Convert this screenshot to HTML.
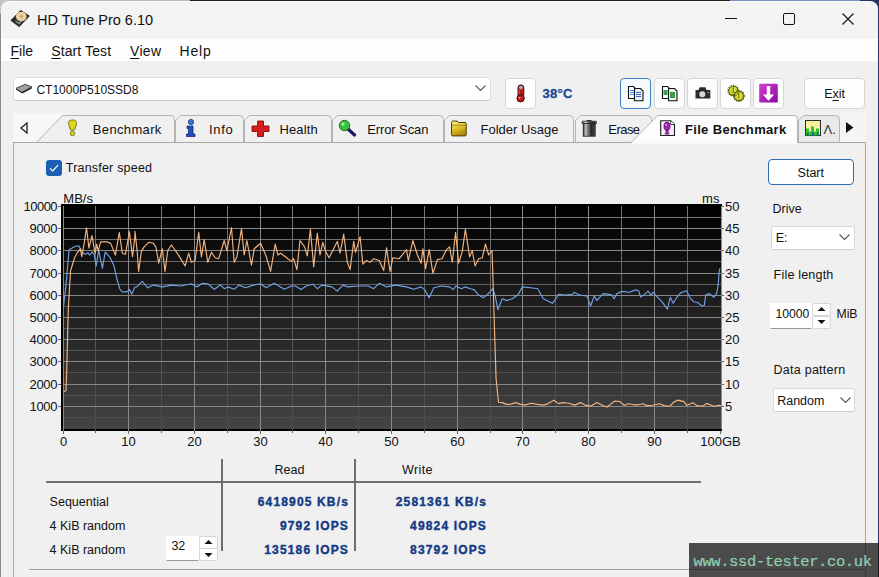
<!DOCTYPE html>
<html><head><meta charset="utf-8">
<style>
*{margin:0;padding:0;box-sizing:border-box}
html,body{width:879px;height:577px;overflow:hidden;background:#1c1c1c;font-family:"Liberation Sans",sans-serif;color:#000}
.a{position:absolute}
.t{position:absolute;white-space:nowrap;color:#111}
.val{font-weight:bold;color:#143a82;letter-spacing:1.15px;-webkit-text-stroke:0.4px #143a82}
u{text-decoration:underline;text-underline-offset:2px;text-decoration-thickness:1px}
.btn{position:absolute;background:#fdfdfd;border:1px solid #d6d6d6;border-radius:4px}
.edit{position:absolute;background:#fff;border:1px solid #dadada;border-bottom-color:#8a8a8a}
</style></head><body>
<div class="a" style="left:0;top:0;width:190px;height:8px;background:#b8b8b8"></div><div class="a" style="left:0;top:0;width:14px;height:14px;background:#c4c4c4"></div><div class="a" style="left:730px;top:0;width:149px;height:8px;background:#8090c0"></div><div class="a" style="left:860px;top:0;width:19px;height:577px;background:#283068"></div><div class="a" style="left:0;top:14px;width:1px;height:563px;background:#8a8a8a"></div>
<div class="a" style="left:1px;top:1px;width:877px;height:580px;background:#f0f0f0;border-radius:8px 8px 0 0;border-top:1px solid #fafafa"></div>
<div class="a" style="left:1px;top:2px;width:877px;height:35px;background:#f3f3f3;border-radius:7px 7px 0 0"></div>
<div class="a" style="left:1px;top:37px;width:877px;height:24px;background:#fdfdfd;border-top:1px solid #ececec"></div>
<svg class="a" style="left:0;top:0" width="40" height="40"><path d="M20.6,10.3 L29.4,15.9 L19.2,26.8 L10.8,20.5 Z" fill="#2c2a28" stroke="#1a1a1a" stroke-width="0.6"/><ellipse cx="21.2" cy="16.6" rx="5.4" ry="4.8" fill="#e9d3a2"/><circle cx="21.4" cy="16.4" r="1.6" fill="#c8aa70"/><path d="M15.5,21 L19,23.5 L21.5,21" stroke="#9a9a9a" stroke-width="1.4" fill="none"/></svg>
<div class="a" style="left:725px;top:18px;width:12px;height:1px;background:#111"></div>
<div class="a" style="left:783px;top:13px;width:12px;height:12px;border:1px solid #111;border-radius:2px"></div>
<svg class="a" style="left:842px;top:13px" width="12" height="12" viewBox="0 0 12 12"><path d="M0.5 0.5L11.5 11.5M11.5 0.5L0.5 11.5" stroke="#111" stroke-width="1.1"/></svg>
<div class="edit" style="left:13px;top:77px;width:478px;height:24px;border-color:#dcdcdc;border-bottom-color:#c8c8c8;border-radius:3px"></div>
<svg class="a" style="left:0;top:70px" width="40" height="30"><path d="M16,88.3 L25.3,84.3 L31.8,87 L22.3,92" fill="#98a0a8" stroke="#2a2a2a" stroke-width="0.8" transform="translate(0,-70)"/><path d="M16,88.3 L16,89.6 L22.3,93.6 L31.8,88.4 L31.8,87 L22.3,92 Z" fill="#1e1e1e" transform="translate(0,-70)"/></svg>
<svg class="a" style="left:475px;top:85px" width="11" height="7" viewBox="0 0 11 7"><path d="M0.5 0.5 L5.5 5.5 L10.5 0.5" fill="none" stroke="#555" stroke-width="1.1"/></svg>
<div class="btn" style="left:505px;top:78px;width:31px;height:31px"></div>
<svg class="a" style="left:500px;top:78px" width="36" height="30" viewBox="500 78 36 30"><rect x="518" y="85" width="5.8" height="12.5" rx="2.6" fill="#b81818" stroke="#2a0a0a" stroke-width="0.9"/><rect x="519" y="86" width="3.8" height="3.2" rx="1.4" fill="#90c0c0"/><path d="M519.2,90v6" stroke="#e06060" stroke-width="0.8"/><circle cx="520.6" cy="98.3" r="3.7" fill="#c01818" stroke="#2a0a0a" stroke-width="0.9"/><circle cx="519.6" cy="97.8" r="0.9" fill="#f0b0b0"/></svg>
<div class="btn" style="left:620px;top:78px;width:31px;height:31px;border-color:#3a82c4;background:#f8fbfe"></div>
<div class="btn" style="left:654px;top:78px;width:31px;height:31px"></div>
<div class="btn" style="left:687px;top:78px;width:31px;height:31px"></div>
<div class="btn" style="left:720px;top:78px;width:31px;height:31px"></div>
<div class="btn" style="left:753px;top:78px;width:31px;height:31px"></div>
<svg class="a" style="left:620px;top:78px" width="70" height="30" viewBox="620 78 70 30"><path d="M628.5,86.5 h5 l2.5,2.5 v9.5 h-7.5z" fill="#fff" stroke="#111" stroke-width="1.1"/><path d="M630,90.5h4M630,92.5h4M630,94.5h4" stroke="#3a8ae0" stroke-width="1"/><path d="M634.5,88.5 h6 l2.5,2.5 v9.8 h-8.5z" fill="#e8f0fa" stroke="#111" stroke-width="1.1"/><path d="M636,92.5h5M636,94.5h5M636,96.5h5" stroke="#3a6ac8" stroke-width="1"/><path d="M662.5,86.5 h5 l2.5,2.5 v9.5 h-7.5z" fill="#fff" stroke="#111" stroke-width="1.1"/><rect x="663.5" y="90" width="4" height="5" fill="#3aa050"/><path d="M668.5,88.5 h6 l2.5,2.5 v9.8 h-8.5z" fill="#e8f4e8" stroke="#111" stroke-width="1.1"/><rect x="670" y="92" width="5" height="6" fill="#3a9a48"/></svg>
<svg class="a" style="left:690px;top:78px" width="95" height="30" viewBox="690 78 95 30"><path d="M695.5,90 h3 l1,-2.8 h6 l1,2.8 h3.8 v8.5 h-14.8z" fill="#2c2c2c"/><circle cx="702.3" cy="94.3" r="3" fill="#d8d8d8"/><circle cx="708.3" cy="92.6" r="0.9" fill="#40c040"/><g fill="#d4dc2a" stroke="#4e4e08" stroke-width="1.1"><circle cx="733.3" cy="90.8" r="4.6"/><circle cx="738.9" cy="96" r="4.6"/></g><g fill="none" stroke="#6a6a10" stroke-width="1.4" stroke-dasharray="1.2 1.2"><circle cx="733.3" cy="90.8" r="5.3"/><circle cx="738.9" cy="96" r="5.3"/></g><path d="M733.3,87.5v5.5M738.9,92.7v5.5" stroke="#6a6a20" stroke-width="1.3"/><path d="M734.3,88v4.5M739.9,93.2v4.5" stroke="#f0f0a0" stroke-width="0.6"/><defs><linearGradient id="pg" x1="0" y1="0" x2="1" y2="1"><stop offset="0" stop-color="#d040d0"/><stop offset="1" stop-color="#8a0aa0"/></linearGradient></defs><rect x="759.2" y="83.8" width="18.6" height="18.6" rx="1.2" fill="url(#pg)"/><path d="M766.8,86 h3.4 v8.5 h4 l-5.7,6.3 l-5.7,-6.3 h4z" fill="#fff"/></svg>
<div class="btn" style="left:804px;top:78px;width:61px;height:31px"></div>
<!-- tab strip -->
<div class="a" style="left:13px;top:113px;width:50px;height:30px;background:#f7f7f7"></div>
<div class="a" style="left:840px;top:113px;width:26px;height:30px;background:#f5f5f5"></div>
<svg class="a" style="left:19px;top:122px" width="10" height="12" viewBox="0 0 10 12"><path d="M8 1 L2 6 L8 11 Z" fill="none" stroke="#222" stroke-width="1.3"/></svg>
<div class="a" style="left:13px;top:142px;width:853px;height:440px;border:1px solid #a8a8a8;border-bottom:none;background:#f0f0f0"></div>
<svg class="a" style="left:0;top:0" width="879" height="150"><path d="M37,142 L62.5,115.5 L170,115.5 Q174.5,115.5 174.5,119.5 L174.5,142 Z" fill="#f0f0f0"/><path d="M37,142 L62.5,115.5 L170,115.5 Q174.5,115.5 174.5,119.5 L174.5,142" fill="none" stroke="#b4b4b4"/><path d="M175.5,142 L175.5,120.5 L180.5,115.5 L239.5,115.5 Q243.5,115.5 243.5,119.5 L243.5,142 Z" fill="#f0f0f0"/><path d="M175.5,142 L175.5,120.5 L180.5,115.5 L239.5,115.5 Q243.5,115.5 243.5,119.5 L243.5,142" fill="none" stroke="#b4b4b4"/><path d="M244.5,142 L244.5,120.5 L249.5,115.5 L327.5,115.5 Q331.5,115.5 331.5,119.5 L331.5,142 Z" fill="#f0f0f0"/><path d="M244.5,142 L244.5,120.5 L249.5,115.5 L327.5,115.5 Q331.5,115.5 331.5,119.5 L331.5,142" fill="none" stroke="#b4b4b4"/><path d="M332.5,142 L332.5,120.5 L337.5,115.5 L439.5,115.5 Q443.5,115.5 443.5,119.5 L443.5,142 Z" fill="#f0f0f0"/><path d="M332.5,142 L332.5,120.5 L337.5,115.5 L439.5,115.5 Q443.5,115.5 443.5,119.5 L443.5,142" fill="none" stroke="#b4b4b4"/><path d="M444.5,142 L444.5,120.5 L449.5,115.5 L569.5,115.5 Q573.5,115.5 573.5,119.5 L573.5,142 Z" fill="#f0f0f0"/><path d="M444.5,142 L444.5,120.5 L449.5,115.5 L569.5,115.5 Q573.5,115.5 573.5,119.5 L573.5,142" fill="none" stroke="#b4b4b4"/><path d="M575.5,142 L575.5,120.5 L580.5,115.5 L647.5,115.5 Q651.5,115.5 651.5,119.5 L651.5,142 Z" fill="#f0f0f0"/><path d="M575.5,142 L575.5,120.5 L580.5,115.5 L647.5,115.5 Q651.5,115.5 651.5,119.5 L651.5,142" fill="none" stroke="#b4b4b4"/><path d="M798.5,142 L798.5,120.5 L803.5,115.5 L835.5,115.5 Q839.5,115.5 839.5,119.5 L839.5,142 Z" fill="#e9e9e9"/><path d="M798.5,142 L798.5,120.5 L803.5,115.5 L835.5,115.5 Q839.5,115.5 839.5,119.5 L839.5,142" fill="none" stroke="#b4b4b4"/></svg>
<svg class="a" style="left:846px;top:122px" width="8" height="11" viewBox="0 0 8 11"><path d="M0 0 L7.5 5.5 L0 11 Z" fill="#111"/></svg>
<!-- tab icons -->
<svg class="a" style="left:67px;top:119px" width="11" height="18" viewBox="0 0 11 18"><path d="M5.5 1 C9 1 10 3 9.5 5 L7.5 11 h-4 L1.5 5 C1 3 2 1 5.5 1z" fill="#d8d820" stroke="#6e6a10" stroke-width="0.9"/><circle cx="5.5" cy="14.5" r="2.2" fill="#d8d820" stroke="#6e6a10" stroke-width="0.9"/></svg>
<svg class="a" style="left:185px;top:119px" width="12" height="18" viewBox="0 0 12 18"><circle cx="6" cy="3" r="2.6" fill="#3a7ae0" stroke="#102a70" stroke-width="0.8"/><path d="M2 7 h6 v8 h2 v2.5 h-8.5 v-2.5 h2 v-5.5 h-1.5z" fill="#2050c0" stroke="#102a70" stroke-width="0.8"/></svg>
<svg class="a" style="left:251px;top:120px" width="19" height="17" viewBox="0 0 19 17"><path d="M6.5 1 h6 v5 h5.5 v5.5 h-5.5 v5 h-6 v-5 h-5.5 v-5.5 h5.5z" fill="#d81c1c" stroke="#801010" stroke-width="0.9"/></svg>
<svg class="a" style="left:338px;top:119px" width="19" height="18" viewBox="0 0 19 18"><path d="M9 9 L16.5 16" stroke="#1a1a6a" stroke-width="3.2" stroke-linecap="round"/><circle cx="6.5" cy="6.5" r="5.2" fill="#3cc040" stroke="#1a5a1a" stroke-width="0.9"/><circle cx="5" cy="5" r="1.5" fill="#b0f0b0"/></svg>
<svg class="a" style="left:448px;top:116px" width="22" height="24" viewBox="448 116 22 24"><defs><linearGradient id="fg" x1="0" y1="0" x2="0.4" y2="1"><stop offset="0" stop-color="#fff0a0"/><stop offset="0.5" stop-color="#e8c830"/><stop offset="1" stop-color="#b08a08"/></linearGradient></defs><path d="M451.5,122.5 q0,-1.5 1.5,-1.5 h4 l1.5,1.5 h6.5 q1.2,0 1.2,1.2 v11 q0,1.2 -1.2,1.2 h-12.3 q-1.2,0 -1.2,-1.2z" fill="url(#fg)" stroke="#4a3c08" stroke-width="1"/><path d="M451.8,125.2 h14.4" stroke="#8a7010" stroke-width="0.7"/></svg>
<svg class="a" style="left:578px;top:116px" width="24" height="24" viewBox="578 116 24 24"><defs><linearGradient id="tg" x1="0" y1="0" x2="1" y2="0"><stop offset="0" stop-color="#3a3a3a"/><stop offset="0.25" stop-color="#d8d8d8"/><stop offset="0.45" stop-color="#6a6a6a"/><stop offset="0.7" stop-color="#2a2a2a"/><stop offset="1" stop-color="#4a4a4a"/></linearGradient></defs><rect x="586.5" y="120" width="5" height="1.6" fill="#333"/><rect x="582" y="121.2" width="14.5" height="2.6" rx="0.8" fill="url(#tg)" stroke="#222" stroke-width="0.7"/><rect x="583.2" y="123.6" width="12" height="12.6" fill="url(#tg)" stroke="#1e1e1e" stroke-width="0.8"/><path d="M587,124.5v11M591,124.5v11" stroke="#1a1a1a" stroke-width="0.6" opacity="0.6"/></svg>
<svg class="a" style="left:805px;top:120px" width="16" height="16" viewBox="0 0 16 16"><rect x="0.5" y="0.5" width="15" height="15" fill="#f4f0a0" stroke="#2a2a2a"/><path d="M1 15.5 v-7 h3 v3 h2 v-5 h3 v5 h2 v-3 h3 v7z" fill="#30c030"/><path d="M2 15.5 v-3 h1.5 v3z M7 15.5v-3h1.5v3z M12 15.5v-3h1.5v3z" fill="#1a4ab0"/></svg>
<!-- checkbox -->
<div class="a" style="left:46px;top:160px;width:16px;height:16px;background:#1b5fb4;border-radius:3px"></div>
<svg class="a" style="left:46px;top:160px" width="16" height="16" viewBox="0 0 16 16"><path d="M4 8.3 L6.7 11 L12 5.2" fill="none" stroke="#fff" stroke-width="1.2"/></svg>
<!-- chart -->
<svg class="a" style="left:0;top:0" width="879" height="577">
<defs><linearGradient id="bg" x1="0" y1="0" x2="0" y2="1"><stop offset="0" stop-color="#000"/><stop offset="1" stop-color="#444"/></linearGradient><linearGradient id="mg" gradientUnits="userSpaceOnUse" x1="0" y1="206" x2="0" y2="430"><stop offset="0" stop-color="#787878"/><stop offset="0.45" stop-color="#5c5c5c"/><stop offset="1" stop-color="#4a4a4a"/></linearGradient></defs>
<rect x="61" y="204" width="661" height="227" fill="#000"/>
<rect x="63" y="206" width="658" height="223" fill="url(#bg)"/>
<g stroke="url(#mg)" stroke-width="1"><line x1="63" y1="417.5" x2="721" y2="417.5"/><line x1="63" y1="395.5" x2="721" y2="395.5"/><line x1="63" y1="372.5" x2="721" y2="372.5"/><line x1="63" y1="350.5" x2="721" y2="350.5"/><line x1="63" y1="328.5" x2="721" y2="328.5"/><line x1="63" y1="306.5" x2="721" y2="306.5"/><line x1="63" y1="284.5" x2="721" y2="284.5"/><line x1="63" y1="261.5" x2="721" y2="261.5"/><line x1="63" y1="239.5" x2="721" y2="239.5"/><line x1="63" y1="217.5" x2="721" y2="217.5"/><line x1="95.5" y1="206" x2="95.5" y2="431"/><line x1="161.5" y1="206" x2="161.5" y2="431"/><line x1="227.5" y1="206" x2="227.5" y2="431"/><line x1="292.5" y1="206" x2="292.5" y2="431"/><line x1="358.5" y1="206" x2="358.5" y2="431"/><line x1="424.5" y1="206" x2="424.5" y2="431"/><line x1="490.5" y1="206" x2="490.5" y2="431"/><line x1="555.5" y1="206" x2="555.5" y2="431"/><line x1="621.5" y1="206" x2="621.5" y2="431"/><line x1="687.5" y1="206" x2="687.5" y2="431"/></g><g stroke="#888" stroke-width="1"><line x1="63" y1="406.5" x2="721" y2="406.5"/><line x1="63" y1="384.5" x2="721" y2="384.5"/><line x1="63" y1="361.5" x2="721" y2="361.5"/><line x1="63" y1="339.5" x2="721" y2="339.5"/><line x1="63" y1="317.5" x2="721" y2="317.5"/><line x1="63" y1="295.5" x2="721" y2="295.5"/><line x1="63" y1="273.5" x2="721" y2="273.5"/><line x1="63" y1="250.5" x2="721" y2="250.5"/><line x1="63" y1="228.5" x2="721" y2="228.5"/><line x1="63.5" y1="206" x2="63.5" y2="431"/><line x1="128.5" y1="206" x2="128.5" y2="431"/><line x1="194.5" y1="206" x2="194.5" y2="431"/><line x1="260.5" y1="206" x2="260.5" y2="431"/><line x1="325.5" y1="206" x2="325.5" y2="431"/><line x1="391.5" y1="206" x2="391.5" y2="431"/><line x1="457.5" y1="206" x2="457.5" y2="431"/><line x1="522.5" y1="206" x2="522.5" y2="431"/><line x1="588.5" y1="206" x2="588.5" y2="431"/><line x1="654.5" y1="206" x2="654.5" y2="431"/></g>
<line x1="721.5" y1="206" x2="721.5" y2="429" stroke="#8a8a8a"/>
<g stroke="#666" stroke-width="1"><line x1="58" y1="206.5" x2="61" y2="206.5"/><line x1="722" y1="206.5" x2="724" y2="206.5"/><line x1="58" y1="228.5" x2="61" y2="228.5"/><line x1="722" y1="228.5" x2="724" y2="228.5"/><line x1="58" y1="250.5" x2="61" y2="250.5"/><line x1="722" y1="250.5" x2="724" y2="250.5"/><line x1="58" y1="273.5" x2="61" y2="273.5"/><line x1="722" y1="273.5" x2="724" y2="273.5"/><line x1="58" y1="295.5" x2="61" y2="295.5"/><line x1="722" y1="295.5" x2="724" y2="295.5"/><line x1="58" y1="317.5" x2="61" y2="317.5"/><line x1="722" y1="317.5" x2="724" y2="317.5"/><line x1="58" y1="339.5" x2="61" y2="339.5"/><line x1="722" y1="339.5" x2="724" y2="339.5"/><line x1="58" y1="361.5" x2="61" y2="361.5"/><line x1="722" y1="361.5" x2="724" y2="361.5"/><line x1="58" y1="384.5" x2="61" y2="384.5"/><line x1="722" y1="384.5" x2="724" y2="384.5"/><line x1="58" y1="406.5" x2="61" y2="406.5"/><line x1="722" y1="406.5" x2="724" y2="406.5"/><line x1="63.5" y1="431" x2="63.5" y2="434"/><line x1="95.5" y1="431" x2="95.5" y2="433"/><line x1="128.5" y1="431" x2="128.5" y2="434"/><line x1="161.5" y1="431" x2="161.5" y2="433"/><line x1="194.5" y1="431" x2="194.5" y2="434"/><line x1="227.5" y1="431" x2="227.5" y2="433"/><line x1="260.5" y1="431" x2="260.5" y2="434"/><line x1="292.5" y1="431" x2="292.5" y2="433"/><line x1="325.5" y1="431" x2="325.5" y2="434"/><line x1="358.5" y1="431" x2="358.5" y2="433"/><line x1="391.5" y1="431" x2="391.5" y2="434"/><line x1="424.5" y1="431" x2="424.5" y2="433"/><line x1="457.5" y1="431" x2="457.5" y2="434"/><line x1="490.5" y1="431" x2="490.5" y2="433"/><line x1="522.5" y1="431" x2="522.5" y2="434"/><line x1="555.5" y1="431" x2="555.5" y2="433"/><line x1="588.5" y1="431" x2="588.5" y2="434"/><line x1="621.5" y1="431" x2="621.5" y2="433"/><line x1="654.5" y1="431" x2="654.5" y2="434"/><line x1="687.5" y1="431" x2="687.5" y2="433"/><line x1="720.5" y1="431" x2="720.5" y2="434"/></g>
<path d="M63.5,306.7 L66.0,285.0 L69.1,249.7 L74.8,246.5 L78.7,245.7 L81.0,249.6 L83.4,253.5 L85.7,254.3 L88.0,252.8 L89.6,255.1 L92.0,252.0 L94.0,254.0 L96.2,266.0 L98.7,250.4 L102.4,268.4 L105.2,252.0 L110.0,257.4 L113.8,265.2 L117.0,279.3 L120.0,289.4 L122.4,291.8 L127.0,291.8 L129.4,289.4 L131.8,294.1 L134.9,287.0 L136.8,286.9 L142.3,281.4 L147.7,287.8 L153.2,285.1 L162.3,286.9 L171.4,285.1 L180.5,286.0 L191.4,283.8 L196.9,286.9 L202.3,283.3 L207.8,283.8 L214.2,289.3 L220.6,285.1 L224.2,288.7 L227.8,286.9 L234.2,289.3 L238.8,285.1 L246.0,287.8 L253.3,285.1 L260.6,283.8 L266.1,287.8 L274.2,283.3 L284.3,289.3 L291.5,286.0 L295.5,286.0 L300.9,289.6 L306.4,286.0 L312.8,284.2 L317.3,288.7 L321.9,285.1 L331.9,286.9 L337.3,291.1 L342.8,285.1 L348.2,286.9 L359.2,286.0 L368.3,286.0 L373.7,288.7 L379.2,283.3 L386.5,286.9 L395.6,285.1 L406.5,286.9 L413.8,289.3 L421.1,286.9 L424.7,289.6 L429.2,297.8 L433.8,287.8 L441.1,286.0 L449.6,286.9 L453.2,289.6 L455.9,286.0 L461.4,288.7 L465.0,286.9 L470.5,288.7 L474.1,289.6 L478.7,295.1 L483.2,297.8 L487.8,294.2 L492.7,288.7 L495.1,295.1 L497.8,309.7 L502.3,298.7 L506.9,300.6 L512.3,298.7 L517.8,295.1 L522.4,286.9 L530.6,287.8 L537.8,288.7 L543.3,298.7 L548.8,301.5 L552.4,303.3 L555.1,299.6 L558.8,294.2 L565.1,295.1 L572.4,294.2 L574.2,292.4 L579.7,295.1 L587.0,296.0 L590.6,306.0 L594.3,296.0 L597.0,300.6 L601.5,295.1 L603.7,293.6 L608.9,294.4 L611.8,295.1 L614.1,298.8 L617.0,293.6 L622.2,291.4 L629.6,292.2 L635.5,289.9 L638.5,290.7 L640.7,297.0 L644.4,294.4 L648.1,291.1 L651.0,295.1 L653.2,292.2 L656.2,295.8 L662.1,301.8 L667.3,309.2 L670.3,297.3 L673.2,303.2 L676.9,297.3 L680.6,292.9 L686.5,290.7 L690.2,298.1 L693.9,301.8 L697.6,302.5 L702.0,305.9 L704.3,305.5 L705.7,295.1 L709.4,293.6 L713.9,297.3 L716.8,292.9 L718.3,284.0 L719.1,272.2 L719.8,268.5" fill="none" stroke="#72a2e4" stroke-width="1.15" stroke-linejoin="round"/>
<path d="M63.5,392.0 L66.0,390.5 L66.6,374.0 L67.5,340.0 L68.3,309.0 L70.5,271.0 L74.5,258.0 L77.2,252.8 L80.3,248.9 L81.8,256.7 L84.2,243.4 L86.5,227.8 L88.9,248.0 L92.0,235.6 L95.1,253.5 L96.7,244.2 L98.2,251.2 L100.6,241.8 L106.8,241.8 L110.7,243.4 L115.4,255.1 L119.3,232.5 L122.4,253.5 L125.5,254.3 L129.4,231.7 L132.5,256.7 L134.9,236.4 L135.0,231.4 L137.2,251.4 L138.6,271.4 L141.4,251.4 L144.1,246.9 L148.7,242.3 L153.2,243.2 L155.9,246.9 L158.7,263.2 L162.3,248.7 L165.0,271.4 L167.8,250.5 L171.4,245.0 L176.0,251.4 L179.6,256.9 L185.1,266.0 L188.7,253.2 L191.4,262.3 L195.1,260.5 L198.7,232.3 L201.4,256.9 L204.2,239.6 L207.8,262.3 L211.5,252.3 L215.1,257.8 L218.7,258.7 L224.2,240.5 L226.9,250.5 L231.5,227.7 L234.2,262.3 L236.9,256.9 L241.5,228.7 L244.2,255.0 L246.9,240.5 L251.5,265.1 L254.2,248.7 L260.6,243.2 L266.1,256.0 L270.6,271.4 L275.2,244.1 L277.9,255.0 L280.6,253.2 L287.9,258.7 L291.5,261.4 L293.6,258.7 L296.9,269.6 L300.0,240.5 L304.6,246.9 L307.3,256.0 L310.4,229.2 L313.7,266.9 L317.3,233.2 L320.0,255.0 L322.8,242.3 L325.5,251.4 L329.1,257.8 L332.8,250.5 L337.3,241.4 L340.1,253.2 L343.7,234.1 L347.3,262.3 L350.1,269.6 L353.7,241.4 L355.5,252.3 L360.1,236.8 L362.8,264.1 L366.5,260.5 L370.1,262.3 L373.7,258.7 L379.2,260.5 L383.7,270.5 L386.5,247.8 L390.1,271.4 L392.8,257.8 L399.2,258.7 L406.5,249.6 L408.3,260.5 L412.9,240.5 L417.4,255.0 L421.1,263.2 L422.9,248.7 L425.6,268.7 L429.2,249.6 L432.9,273.2 L437.4,259.6 L442.0,258.7 L446.5,249.6 L449.6,246.9 L452.3,262.3 L455.6,232.3 L458.7,263.2 L462.3,251.4 L465.4,229.2 L469.6,256.9 L472.3,250.5 L475.0,266.0 L478.7,258.7 L482.3,257.8 L485.4,244.1 L488.7,255.0 L492.0,250.5 L492.7,269.6 L494.5,330.0 L495.5,360.0 L496.0,377.8 L498.5,402.2 L502.2,402.6 L506.6,404.4 L511.1,404.1 L515.5,402.6 L519.9,404.1 L524.4,405.1 L531.0,403.3 L537.7,404.4 L543.6,405.1 L548.0,403.6 L553.9,400.2 L558.4,403.6 L562.8,402.6 L568.7,403.2 L574.7,405.1 L580.6,402.6 L585.0,405.1 L590.9,406.1 L596.8,402.6 L602.8,405.6 L607.2,407.0 L610.7,404.1 L614.9,401.0 L619.9,401.6 L624.2,405.3 L628.4,403.8 L634.1,404.8 L638.4,404.8 L642.7,403.8 L646.9,405.6 L652.6,405.3 L659.7,403.8 L664.0,405.6 L669.7,406.3 L673.9,402.0 L678.2,400.1 L683.9,401.6 L686.7,405.3 L693.1,402.7 L696.7,405.6 L702.4,406.3 L706.7,403.4 L713.8,406.3 L718.7,405.3 L720.9,405.6" fill="none" stroke="#f2b480" stroke-width="1.15" stroke-linejoin="round"/>
</svg>
<!-- right panel -->
<div class="btn" style="left:768px;top:159px;width:86px;height:26px;border-color:#2f6fae;background:#fdfdfd;border-radius:4px"></div>
<div class="edit" style="left:771px;top:226px;width:84px;height:24px;border-radius:2px;border-color:#d8d8d8;border-bottom-color:#cfcfcf"></div>
<svg class="a" style="left:839px;top:234px" width="11" height="7" viewBox="0 0 11 7"><path d="M0.5 0.5 L5.5 5.5 L10.5 0.5" fill="none" stroke="#555" stroke-width="1.1"/></svg>
<div class="edit" style="left:770px;top:303px;width:42px;height:26px;border-color:#fff;border-bottom-color:#999"></div>
<div class="btn" style="left:812px;top:303px;width:19px;height:13px;border-radius:2px"></div>
<div class="btn" style="left:812px;top:316px;width:19px;height:13px;border-radius:2px"></div>
<svg class="a" style="left:817px;top:306px" width="9" height="20"><path d="M0.5 5 L4.5 1 L8.5 5z M0.5 14 L4.5 18 L8.5 14z" fill="#111"/></svg>
<div class="edit" style="left:773px;top:388px;width:82px;height:24px;border-radius:2px;border-color:#d8d8d8;border-bottom-color:#cfcfcf"></div>
<svg class="a" style="left:840px;top:397px" width="11" height="7" viewBox="0 0 11 7"><path d="M0.5 0.5 L5.5 5.5 L10.5 0.5" fill="none" stroke="#555" stroke-width="1.1"/></svg>
<!-- table -->
<div class="a" style="left:221px;top:459px;width:2px;height:92px;background:#6e6e6e"></div>
<div class="a" style="left:354px;top:459px;width:2px;height:92px;background:#6e6e6e"></div>
<div class="a" style="left:46px;top:481px;width:655px;height:2px;background:#6e6e6e"></div>
<div class="edit" style="left:166px;top:536px;width:33px;height:25px;border-color:#fff;border-bottom-color:#999"></div>
<div class="btn" style="left:199px;top:536px;width:19px;height:13px;border-radius:2px"></div>
<div class="btn" style="left:199px;top:548px;width:19px;height:13px;border-radius:2px"></div>
<svg class="a" style="left:204px;top:539px" width="9" height="20"><path d="M0.5 5 L4.5 1 L8.5 5z M0.5 14 L4.5 18 L8.5 14z" fill="#111"/></svg>
<div class="a" style="left:29px;top:569px;width:837px;height:1px;background:#a0a0a0"></div>
<div class="t " style="left:37px;top:12.5px;font-size:14.5px;line-height:14.5px;">HD Tune Pro 6.10</div>
<div class="t " style="left:10.5px;top:43.9px;font-size:14px;line-height:14px;letter-spacing:0px"><u>F</u>ile</div>
<div class="t " style="left:51.25px;top:43.9px;font-size:14px;line-height:14px;letter-spacing:0.1px"><u>S</u>tart Test</div>
<div class="t " style="left:130px;top:43.9px;font-size:14px;line-height:14px;letter-spacing:0.3px"><u>V</u>iew</div>
<div class="t " style="left:179.5px;top:43.9px;font-size:14px;line-height:14px;letter-spacing:0.8px">Help</div>
<div class="t " style="left:36.4px;top:83.7px;font-size:12px;line-height:12px;">CT1000P510SSD8</div>
<div class="t " style="left:542.4px;top:87.0px;font-size:13px;line-height:13px;font-weight:bold;color:#1c4a92;letter-spacing:0.3px;-webkit-text-stroke:0.3px #1c4a92">38°C</div>
<div class="t " style="left:824.2px;top:88.1px;font-size:12.5px;line-height:12.5px;">E<u>x</u>it</div>
<div class="t " style="left:92.8px;top:122.7px;font-size:13px;line-height:13px;letter-spacing:0.35px">Benchmark</div>
<div class="t " style="left:209px;top:122.7px;font-size:13px;line-height:13px;letter-spacing:0.7px">Info</div>
<div class="t " style="left:279.4px;top:122.7px;font-size:13px;line-height:13px;letter-spacing:0.15px">Health</div>
<div class="t " style="left:367.2px;top:122.7px;font-size:13px;line-height:13px;letter-spacing:-0.1px">Error Scan</div>
<div class="t " style="left:480.5px;top:122.7px;font-size:13px;line-height:13px;letter-spacing:0px">Folder Usage</div>
<div class="t " style="left:608.3px;top:122.7px;font-size:13px;line-height:13px;letter-spacing:-0.55px">Erase</div>
<svg class="a" style="left:0;top:0" width="879" height="150"><path d="M631,143.5 L657.7,115.5 L793,115.5 Q797.5,115.5 797.5,119.5 L797.5,143.5 Z" fill="#fdfdfd"/><path d="M631,142.5 L657.7,115.5 L793,115.5 Q797.5,115.5 797.5,119.5 L797.5,142.5" fill="none" stroke="#b4b4b4"/></svg><svg class="a" style="left:655px;top:115px" width="25" height="25" viewBox="655 115 25 25"><path d="M660.7,120.7 h10 l3.8,3.8 v11 h-13.8z" fill="#f4f0f4" stroke="#1e1e1e" stroke-width="1.1"/><path d="M670.7,120.7 v3.8 h3.8" fill="#fff" stroke="#1e1e1e" stroke-width="0.8"/><ellipse cx="667" cy="126.3" rx="3" ry="4.2" fill="#a020b8" stroke="#5a0a6a" stroke-width="0.8"/><path d="M665.8,130 h2.6 v2 h-2.6z" fill="#7a1090"/><path d="M665.2,132.6 h3.8 v1.6 h-3.8z" fill="#a020b8" stroke="#5a0a6a" stroke-width="0.5"/><circle cx="666" cy="125" r="1" fill="#e090f0"/></svg><div class="t " style="left:684.9px;top:122.5px;font-size:13px;line-height:13px;font-weight:bold;letter-spacing:0.35px">File Benchmark</div>
<div class="t " style="left:823.5px;top:122.5px;font-size:13px;line-height:13px;color:#333">Λ.</div>
<div class="t " style="left:65.8px;top:162.4px;font-size:12.5px;line-height:12.5px;letter-spacing:0.2px">Transfer speed</div>
<div class="t " style="left:63.3px;top:191.7px;font-size:13px;line-height:13px;">MB/s</div>
<div class="t " style="right:159.60000000000002px;top:191.7px;font-size:13px;line-height:13px;">ms</div>
<div class="t " style="right:821.9px;top:200.0px;font-size:13px;line-height:13px;letter-spacing:-0.5px">10000</div>
<div class="t " style="left:725px;top:200.0px;font-size:13px;line-height:13px;">50</div>
<div class="t " style="right:821.9px;top:222.2px;font-size:13px;line-height:13px;letter-spacing:-0.35px">9000</div>
<div class="t " style="left:725px;top:222.2px;font-size:13px;line-height:13px;">45</div>
<div class="t " style="right:821.9px;top:244.4px;font-size:13px;line-height:13px;letter-spacing:-0.35px">8000</div>
<div class="t " style="left:725px;top:244.4px;font-size:13px;line-height:13px;">40</div>
<div class="t " style="right:821.9px;top:266.6px;font-size:13px;line-height:13px;letter-spacing:-0.35px">7000</div>
<div class="t " style="left:725px;top:266.6px;font-size:13px;line-height:13px;">35</div>
<div class="t " style="right:821.9px;top:288.8px;font-size:13px;line-height:13px;letter-spacing:-0.35px">6000</div>
<div class="t " style="left:725px;top:288.8px;font-size:13px;line-height:13px;">30</div>
<div class="t " style="right:821.9px;top:311.0px;font-size:13px;line-height:13px;letter-spacing:-0.35px">5000</div>
<div class="t " style="left:725px;top:311.0px;font-size:13px;line-height:13px;">25</div>
<div class="t " style="right:821.9px;top:333.2px;font-size:13px;line-height:13px;letter-spacing:-0.35px">4000</div>
<div class="t " style="left:725px;top:333.2px;font-size:13px;line-height:13px;">20</div>
<div class="t " style="right:821.9px;top:355.4px;font-size:13px;line-height:13px;letter-spacing:-0.35px">3000</div>
<div class="t " style="left:725px;top:355.4px;font-size:13px;line-height:13px;">15</div>
<div class="t " style="right:821.9px;top:377.6px;font-size:13px;line-height:13px;letter-spacing:-0.35px">2000</div>
<div class="t " style="left:725px;top:377.6px;font-size:13px;line-height:13px;">10</div>
<div class="t " style="right:821.9px;top:399.8px;font-size:13px;line-height:13px;letter-spacing:-0.35px">1000</div>
<div class="t " style="left:725px;top:399.8px;font-size:13px;line-height:13px;">5</div>
<div class="t " style="left:13.5px;width:100px;text-align:center;top:434.5px;font-size:13px;line-height:13px;">0</div>
<div class="t " style="left:78.5px;width:100px;text-align:center;top:434.5px;font-size:13px;line-height:13px;">10</div>
<div class="t " style="left:144.5px;width:100px;text-align:center;top:434.5px;font-size:13px;line-height:13px;">20</div>
<div class="t " style="left:210.5px;width:100px;text-align:center;top:434.5px;font-size:13px;line-height:13px;">30</div>
<div class="t " style="left:275.5px;width:100px;text-align:center;top:434.5px;font-size:13px;line-height:13px;">40</div>
<div class="t " style="left:341.5px;width:100px;text-align:center;top:434.5px;font-size:13px;line-height:13px;">50</div>
<div class="t " style="left:407.5px;width:100px;text-align:center;top:434.5px;font-size:13px;line-height:13px;">60</div>
<div class="t " style="left:472.5px;width:100px;text-align:center;top:434.5px;font-size:13px;line-height:13px;">70</div>
<div class="t " style="left:538.5px;width:100px;text-align:center;top:434.5px;font-size:13px;line-height:13px;">80</div>
<div class="t " style="left:604.5px;width:100px;text-align:center;top:434.5px;font-size:13px;line-height:13px;">90</div>
<div class="t " style="left:670.5px;width:100px;text-align:center;top:434.5px;font-size:13px;line-height:13px;">100GB</div>
<div class="t " style="left:797.6px;top:166.9px;font-size:12.5px;line-height:12.5px;">Start</div>
<div class="t " style="left:772.6px;top:203.1px;font-size:12.5px;line-height:12.5px;">Drive</div>
<div class="t " style="left:775.7px;top:232.4px;font-size:12.5px;line-height:12.5px;">E:</div>
<div class="t " style="left:773.6px;top:269.1px;font-size:12.5px;line-height:12.5px;letter-spacing:0.2px">File length</div>
<div class="t " style="left:775.5px;top:308.0px;font-size:12.2px;line-height:12.2px;">10000</div>
<div class="t " style="left:836.5px;top:308.0px;font-size:12.2px;line-height:12.2px;">MiB</div>
<div class="t " style="left:773.6px;top:363.6px;font-size:12.5px;line-height:12.5px;letter-spacing:0.25px">Data pattern</div>
<div class="t " style="left:777.2px;top:395.0px;font-size:12.5px;line-height:12.5px;">Random</div>
<div class="t " style="left:274.5px;top:463.5px;font-size:12.5px;line-height:12.5px;">Read</div>
<div class="t " style="left:402px;top:463.5px;font-size:12.5px;line-height:12.5px;letter-spacing:0.4px">Write</div>
<div class="t " style="left:49.6px;top:495.5px;font-size:12.5px;line-height:12.5px;">Sequential</div>
<div class="t " style="left:49.6px;top:520.0px;font-size:12.5px;line-height:12.5px;">4 KiB random</div>
<div class="t " style="left:49.6px;top:543.9px;font-size:12.5px;line-height:12.5px;">4 KiB random</div>
<div class="t " style="left:171.4px;top:540.2px;font-size:12.5px;line-height:12.5px;">32</div>
<div class="t val" style="right:530px;top:495.6px;font-size:12px;line-height:12px;">6418905 KB/s</div>
<div class="t val" style="right:530px;top:520.2px;font-size:12px;line-height:12px;">9792 IOPS</div>
<div class="t val" style="right:530px;top:543.9px;font-size:12px;line-height:12px;">135186 IOPS</div>
<div class="t val" style="right:392px;top:495.6px;font-size:12px;line-height:12px;">2581361 KB/s</div>
<div class="t val" style="right:392px;top:520.2px;font-size:12px;line-height:12px;">49824 IOPS</div>
<div class="t val" style="right:392px;top:543.9px;font-size:12px;line-height:12px;">83792 IOPS</div>

<!-- watermark -->
<div class="a" style="left:689px;top:543px;width:190px;height:34px;background:rgba(20,20,20,0.75)"></div>
<div class="t" style="left:693.5px;top:553.5px;font-family:'Liberation Mono',monospace;font-size:15.5px;line-height:16px;color:#8fd0b0;letter-spacing:-0.4px;-webkit-text-stroke:0.2px #8fd0b0">www.ssd-tester.co.uk</div>
</body></html>
